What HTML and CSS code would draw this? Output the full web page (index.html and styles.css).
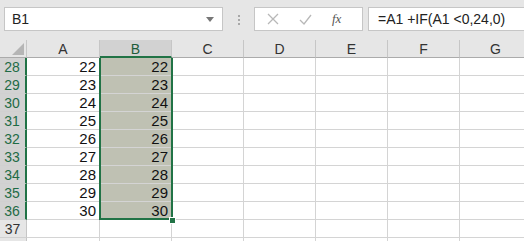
FILE: index.html
```html
<!DOCTYPE html>
<html>
<head>
<meta charset="utf-8">
<link rel="stylesheet" href="styles.css">
</head>
<body>
<div class="toolbar">
  <div class="namebox">
    <span class="nb-text">B1</span>
    <svg class="nb-arrow" width="8" height="5" viewBox="0 0 8 5"><path d="M0 0H8L4 5Z" fill="#777"/></svg>
  </div>
  <div class="dots"><i></i><i></i><i></i></div>
  <div class="fbtns">
    <svg width="12" height="12" viewBox="0 0 12 12"><path d="M1 1L11 11M11 1L1 11" stroke="#b8b8b8" stroke-width="1.3"/></svg>
    <svg width="13" height="11" viewBox="0 0 13 11"><path d="M1 6L5 10L12 1" stroke="#b8b8b8" stroke-width="1.3" fill="none"/></svg>
    <span class="fx">fx</span>
  </div>
  <div class="formula">=A1 +IF(A1 &lt;0,24,0)</div>
</div>
<div class="sheet">
  <div class="grid">
    <div class="corner"><svg width="12" height="12" viewBox="0 0 12 12"><path d="M12 0V12H0Z" fill="#b5b5b5"/></svg></div>
    <div class="ch">A</div>
    <div class="ch sel">B</div>
    <div class="ch">C</div>
    <div class="ch">D</div>
    <div class="ch">E</div>
    <div class="ch">F</div>
    <div class="ch">G</div>

    <div class="rh sel">28</div><div class="c num">22</div><div class="c num s">22</div><div class="c"></div><div class="c"></div><div class="c"></div><div class="c"></div><div class="c"></div>
    <div class="rh sel">29</div><div class="c num">23</div><div class="c num s">23</div><div class="c"></div><div class="c"></div><div class="c"></div><div class="c"></div><div class="c"></div>
    <div class="rh sel">30</div><div class="c num">24</div><div class="c num s">24</div><div class="c"></div><div class="c"></div><div class="c"></div><div class="c"></div><div class="c"></div>
    <div class="rh sel">31</div><div class="c num">25</div><div class="c num s">25</div><div class="c"></div><div class="c"></div><div class="c"></div><div class="c"></div><div class="c"></div>
    <div class="rh sel">32</div><div class="c num">26</div><div class="c num s">26</div><div class="c"></div><div class="c"></div><div class="c"></div><div class="c"></div><div class="c"></div>
    <div class="rh sel">33</div><div class="c num">27</div><div class="c num s">27</div><div class="c"></div><div class="c"></div><div class="c"></div><div class="c"></div><div class="c"></div>
    <div class="rh sel">34</div><div class="c num">28</div><div class="c num s">28</div><div class="c"></div><div class="c"></div><div class="c"></div><div class="c"></div><div class="c"></div>
    <div class="rh sel">35</div><div class="c num">29</div><div class="c num s">29</div><div class="c"></div><div class="c"></div><div class="c"></div><div class="c"></div><div class="c"></div>
    <div class="rh sel">36</div><div class="c num">30</div><div class="c num s">30</div><div class="c"></div><div class="c"></div><div class="c"></div><div class="c"></div><div class="c"></div>
    <div class="rh">37</div><div class="c"></div><div class="c"></div><div class="c"></div><div class="c"></div><div class="c"></div><div class="c"></div><div class="c"></div>
    <div class="rh"></div><div class="c"></div><div class="c"></div><div class="c"></div><div class="c"></div><div class="c"></div><div class="c"></div><div class="c"></div>
  </div>
  <div class="selection"></div>
  <div class="handle"></div>
</div>
</body>
</html>
```
FILE: styles.css
```css
* { box-sizing: border-box; }
html, body { margin: 0; padding: 0; }
body {
  width: 524px;
  height: 241px;
  overflow: hidden;
  background: #fff;
  font-family: "Liberation Sans", Arial, "Noto Sans CJK JP", sans-serif;
}
.toolbar {
  height: 40px;
  background: #e6e6e6;
  display: flex;
  align-items: flex-start;
  padding: 7px 0 0 4px;
}
.namebox {
  width: 219px;
  height: 24px;
  background: #fff;
  border: 1px solid #c6c6c6;
  display: flex;
  align-items: center;
  justify-content: space-between;
  padding: 0 8px 0 7px;
}
.nb-text { font-size: 14px; color: #222; }
.nb-arrow { margin-top: 1px; }
.dots {
  width: 31px;
  display: flex;
  flex-direction: column;
  align-items: center;
  gap: 2px;
  padding-top: 8px;
}
.dots i { width: 2px; height: 2px; background: #a8a8a8; display: block; }
.fbtns {
  width: 109px;
  height: 24px;
  background: #fff;
  border: 1px solid #c6c6c6;
  display: flex;
  align-items: center;
  padding-left: 12px;
}
.fbtns svg:nth-child(1) { margin-right: 20px; }
.fbtns svg:nth-child(2) { margin-right: 20px; }
.fx {
  font-family: "Liberation Serif", serif;
  font-style: italic;
  font-size: 13px;
  color: #555;
}
.formula {
  flex: 1;
  margin-left: 5px;
  height: 24px;
  background: #fff;
  border: 1px solid #c6c6c6;
  border-right: none;
  font-size: 14px;
  color: #222;
  padding-left: 9px;
  line-height: 22px;
}
.sheet {
  position: relative;
  height: 201px;
  overflow: hidden;
}
.grid {
  display: grid;
  grid-template-columns: 27px 73px 72px 72px 72px 72px 72px 72px;
  grid-auto-rows: 18px;
  width: 532px;
}
.corner {
  background: #e6e6e6;
  border-right: 1px solid #c6c6c6;
  border-bottom: 1px solid #ababab;
  display: flex;
  align-items: flex-end;
  justify-content: flex-end;
  padding: 0 2px 2px 0;
}
.ch {
  background: #e6e6e6;
  border-right: 1px solid #c6c6c6;
  border-bottom: 1px solid #ababab;
  text-align: center;
  font-size: 14px;
  line-height: 18px;
  color: #333;
}
.ch.sel {
  background: #d2d2d2;
  color: #1e5c3a;
  border-bottom: 2px solid #217346;
}
.rh {
  background: #e6e6e6;
  border-right: 1px solid #c6c6c6;
  border-bottom: 1px solid #d0d0d0;
  text-align: center;
  font-size: 14px;
  line-height: 18px;
  color: #333;
  padding-right: 1px;
}
.rh.sel {
  background: #d2d2d2;
  color: #1e6b45;
  border-right: 2px solid #217346;
}
.c {
  border-right: 1px solid #d4d4d4;
  border-bottom: 1px solid #d4d4d4;
}
.num {
  text-align: right;
  font-size: 15px;
  line-height: 18px;
  color: #111;
  padding-right: 3px;
}
.c.s { background: #bfc1b3; }
.selection {
  position: absolute;
  left: 99px;
  top: 18px;
  width: 74px;
  height: 162px;
  border: 2px solid #217346;
  border-top: none;
  pointer-events: none;
}
.handle {
  position: absolute;
  left: 169px;
  top: 177px;
  width: 7px;
  height: 7px;
  background: #217346;
  border: 1px solid #fff;
}
```
